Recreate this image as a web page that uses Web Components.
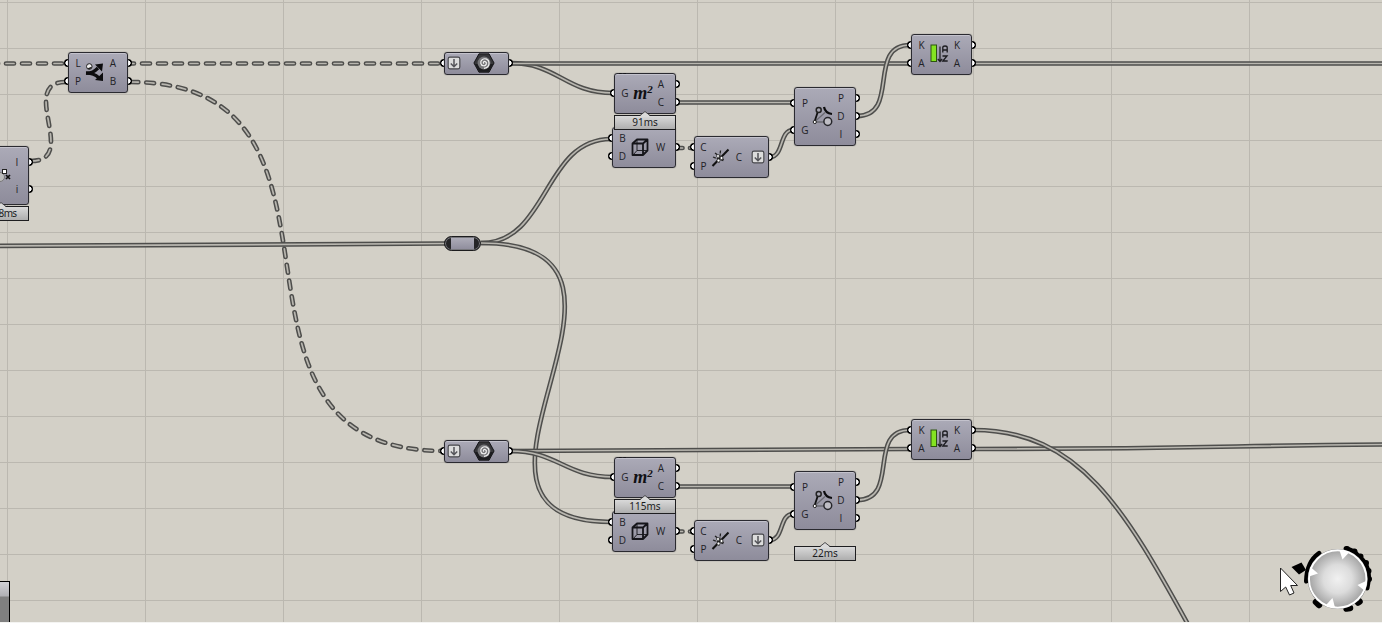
<!DOCTYPE html>
<html lang="en">
<head>
<meta charset="utf-8">
<title>Definition canvas</title>
<style>
    html, body {
        margin: 0;
        width: 100%;
        height: 100%;
        overflow: hidden;
        background: #d3d0c7;
    }
</style>
</head>
<body>
<gh-canvas>
    <gh-wires slot="wires"></gh-wires>

    <gh-component style="left:68px; top:52px; --w:60px; --in:18px" inputs="L,P" outputs="A,B" icon="dispatch"></gh-component>
    <gh-component style="left:-28px; top:146px; --w:57px; --h:59px; --out:22px" inputs="" outputs="I,i" icon="points"></gh-component>
    <gh-timer style="left:-28px; top:206px; --w:57px; --shift:14px; letter-spacing:-.7px">8ms</gh-timer>

    <gh-param style="left:444px; top:52px" ></gh-param>
    <gh-relay style="left:444px; top:236px"></gh-relay>
    <gh-param style="left:444px; top:440px"></gh-param>

    <gh-component style="left:612px; top:127px; --w:64px; --in:19px; --out:29px" inputs="B,D" outputs="W" icon="box"></gh-component>
    <gh-component style="left:614px; top:73px; --w:62px; --in:20px" inputs="G" outputs="A,C" icon="area"></gh-component>
    <gh-timer style="left:614px; top:115px; --w:62px">91ms</gh-timer>
    <gh-component style="left:694px; top:136px; --w:75px; --in:17px; --out:18px; --h:42px" inputs="C,P" outputs="C" icon="curve" graft></gh-component>
    <gh-component style="left:794px; top:87px; --w:62px; --h:59px; --in:20px" inputs="P,G" outputs="P,D,I" icon="pull"></gh-component>
    <gh-component style="left:911px; top:34px; --w:61px" inputs="K,A" outputs="K,A" icon="sort"></gh-component>

    <gh-component style="left:612px; top:511px; --w:64px; --in:19px; --out:29px" inputs="B,D" outputs="W" icon="box"></gh-component>
    <gh-component style="left:614px; top:457px; --w:62px; --in:20px" inputs="G" outputs="A,C" icon="area"></gh-component>
    <gh-timer style="left:614px; top:499px; --w:62px">115ms</gh-timer>
    <gh-component style="left:694px; top:520px; --w:75px; --in:17px; --out:18px" inputs="C,P" outputs="C" icon="curve" graft></gh-component>
    <gh-component style="left:794px; top:471px; --w:62px; --h:59px; --in:20px" inputs="P,G" outputs="P,D,I" icon="pull"></gh-component>
    <gh-timer style="left:794px; top:546px; --w:62px">22ms</gh-timer>
    <gh-component style="left:911px; top:419px; --w:61px" inputs="K,A" outputs="K,A" icon="sort"></gh-component>

    <gh-compass slot="overlay"></gh-compass>
</gh-canvas>

<script>
const svg = (body, size = 24) =>
    `<svg width="${size}" height="${size}" viewBox="0 0 24 24" fill="none">${body}</svg>`;

const icons = {
    dispatch: svg(`
        <g stroke="#0c0c0e" stroke-width="3.200">
            <path d="M3 13.200C9 13 11 12 15 8"/>
            <path d="M3 13.200C9 13.500 12 14 16 18"/>
        </g>
        <path d="M12 4.500L20 3.500L19 11.500ZM20 12.500L20 21L12 20Z" fill="#0c0c0e"/>
        <circle cx="6.300" cy="6.500" r="2.800" fill="#f0f0f0" stroke="#222"/>
        <path d="M4.200 8.500A3 3 0 0 0 9 6.500Z" fill="#222"/>`),
    points: svg(`
        <circle cx="12" cy="14" r="4.500" fill="#bcbcbc" stroke="#777"/>
        <rect x="14.500" y="6.500" width="4" height="4" fill="#fff" stroke="#222"/>
        <path d="M18 12L22 16M22 12L18 16" stroke="#111" stroke-width="1.700"/>`),
    area: `<b>m<sup>2</sup></b>`,
    box: svg(`
        <g stroke="#15151a" stroke-width="1.800" stroke-linejoin="round">
            <path d="M4.500 8.500H15V20H4.500ZM4.500 8.500L9 4.500H19.500L15 8.500M19.500 4.500V15.500L15 20"/>
            <path d="M9 5V15.500H19.500M9 15.500L5 20" stroke-width=".9"/>
        </g>`),
    curve: svg(`
        <path d="M4.500 21L20.500 4.500" stroke="#111" stroke-width="2"/>
        <path d="M5 12L16 16M12.500 5.500L11 18M7 8L16 15" stroke="#222" stroke-width="1.300" stroke-dasharray="3 1"/>
        <g fill="#fff" stroke="#222" stroke-width=".7">
            <circle cx="10" cy="11" r="1.500"/><circle cx="13.500" cy="13" r="1.500"/><circle cx="10.500" cy="15.500" r="1.500"/>
        </g>`),
    pull: svg(`
        <path d="M3.500 18L14 8.500M3.500 18H16" stroke="#6a6a72" stroke-width="1.300"/>
        <path d="M3.500 18L7 7" stroke="#111" stroke-width="1.800"/>
        <circle cx="7.700" cy="6" r="2.500" fill="#a5a4b0" stroke="#222" stroke-width="1.500"/>
        <path d="M13 3C14 8 16.500 9.500 21 10" stroke="#0c0c0e" stroke-width="2.200"/>
        <circle cx="16.800" cy="17.500" r="3.900" fill="#bebdc4" stroke="#26262b" stroke-width="1.500"/>
        <circle cx="3.800" cy="18" r="1.600" fill="#fff" stroke="#222"/>`),
    sort: svg(`
        <rect x="4" y="3" width="5.500" height="16.500" fill="#84e321" stroke="#2c5410"/>
        <path d="M13 4.500V19M10.800 17L13 19.500L15.200 17" stroke="#1b1b1f" stroke-width="1.200"/>
        <path d="M15.800 10.500V5.500Q15.800 4 18 4T20.200 5.500V10.500M15.800 8H20.200M15.500 14H20L15.800 19H20.700" stroke="#1b1b1f" stroke-width="1.300"/>`)
};

const graftBadge = svg(`
    <rect x="2" y="2" width="20" height="20" rx="3" fill="#dcdcdc" stroke="#48484c" stroke-width="2"/>
    <path d="M12 5V18.500M6.500 13L12 18.500L17.500 13" stroke="#55555a" stroke-width="2.600"/>`, 14);

// Shared look of every capsule: body gradient plus the grips sticking out behind it
const capsuleCss = `
    :host {
        position: absolute;
        display: block;
        isolation: isolate;
        width: var(--w, 60px);
        height: var(--h, 41px);
        font: 10px/14px "Open Sans", "Noto Sans", sans-serif;
        color: #222226;
    }
    svg { display: block; flex: none; }
    .body {
        display: flex;
        align-items: stretch;
        box-sizing: border-box;
        width: 100%;
        height: 100%;
        padding: 1px 0 2px;
        border: 1px solid #2a2a30;
        border-radius: 3px;
        background: linear-gradient(#abaab7, #8e8c9b);
        box-shadow: inset 0 1px #c3c2cc, 0 0 1px #55555a;
    }
    .grips {
        position: absolute;
        z-index: -1;
        top: 2px;
        bottom: 3px;
        display: flex;
        flex-direction: column;
    }
    .grips.left { left: -4px; }
    .grips.right { right: -4px; }
    .grips span { flex: 1; display: flex; align-items: center; }
    .grips span::before {
        content: "";
        width: 8px;
        height: 8px;
        border-radius: 50%;
        background: radial-gradient(circle, #fff 2.300px, #000 2.900px);
    }
`;

function grips(side, count) {
    return `<div class="grips ${side}">${'<span></span>'.repeat(count)}</div>`;
}

class GhComponent extends HTMLElement {
    constructor() {
        super();
        this.attachShadow({ mode: 'open' });
    }

    connectedCallback() {
        const names = attr => (this.getAttribute(attr) || '').split(',').filter(Boolean);
        const inputs = names('inputs');
        const outputs = names('outputs');
        const labels = list => list.map(n => `<span>${n}</span>`).join('');
        const icon = this.getAttribute('icon');

        this.shadowRoot.innerHTML = `
            <style>
                ${capsuleCss}
                .labels { display: flex; flex-direction: column; flex: none; }
                .labels span { flex: 1; display: flex; align-items: center; justify-content: center; }
                .in { width: var(--in, 19px); }
                .out { width: var(--out, 28px); margin-left: auto; }
                .icon {
                    flex: none;
                    width: 18px;
                    margin-right: -12px;
                    margin-left: -1px;
                    display: flex;
                    align-items: center;
                    justify-content: center;
                }
                .badge { width: 20px; display: flex; align-items: center; justify-content: center; }
                b { font: italic bold 18px/20px "Liberation Serif", serif; color: #101014; white-space: nowrap; }
                sup { font-size: 11px; line-height: 0; vertical-align: 6px; }
                .dots { position: absolute; left: 5px; top: 0; width: 7px; border-top: 1px dashed #17171a; }
            </style>
            ${grips('left', inputs.length)}
            ${grips('right', outputs.length)}
            <div class="body">
                <div class="labels in">${labels(inputs)}</div>
                <div class="icon">${icons[icon]}</div>
                <div class="labels out">${labels(outputs)}</div>
                ${this.hasAttribute('graft') ? `<div class="badge">${graftBadge}</div>` : ''}
            </div>
            ${icon === 'area' ? '<i class="dots"></i>' : ''}
        `;
    }
}

class GhParam extends HTMLElement {
    constructor() {
        super();
        this.attachShadow({ mode: 'open' });
        this.shadowRoot.innerHTML = `
            <style>
                ${capsuleCss}
                :host { --w: 65px; --h: 23px; }
                .body { align-items: center; padding: 0 13px 1px 2px; justify-content: space-between; }
            </style>
            ${grips('left', 1)}
            ${grips('right', 1)}
            <div class="body">
                ${graftBadge}
                ${svg(`
                    <path d="M6.500 2H17.500L23 12L17.500 22H6.500L1 12Z" fill="#37373a" stroke="#0e0e10"/>
                    <path d="M2 13L7 21.500H17L22 13Z" fill="#1c1c1f"/>
                    <circle cx="12" cy="12" r="7" fill="#77777a"/>
                    <path d="M12 12.500C10.500 11.500 12 9.500 13.500 10.500C16 12 14 15.500 11.500 15C8 14.500 7.500 10.500 10 8.500C13 6 17.500 8 17.500 12C17.500 15.500 15 17.500 12 17.800" stroke="#f0f0f0" stroke-width="1.300"/>`, 22)}
            </div>
        `;
    }
}

class GhRelay extends HTMLElement {
    constructor() {
        super();
        this.attachShadow({ mode: 'open' });
        this.shadowRoot.innerHTML = `
            <style>
                :host {
                    position: absolute;
                    box-sizing: border-box;
                    display: flex;
                    width: 37px;
                    height: 15px;
                    padding: 1px 6px;
                    border: 1px solid #1c1c1e;
                    border-radius: 8px;
                    background: #252527;
                    box-shadow: inset 0 0 0 1px #77777c;
                }
                div { flex: 1; background: linear-gradient(#adacb8, #908e9d); }
            </style>
            <div></div>
        `;
    }
}

class GhTimer extends HTMLElement {
    constructor() {
        super();
        this.attachShadow({ mode: 'open' });
        this.shadowRoot.innerHTML = `
            <style>
                :host {
                    position: absolute;
                    box-sizing: border-box;
                    display: flex;
                    justify-content: center;
                    width: var(--w);
                    height: 15px;
                    border: 1px solid #1e1e20;
                    background: linear-gradient(#d9d9d9, #aeaeae);
                    font: 10px/13px "Noto Sans", "Open Sans", sans-serif;
                    color: #1c1c1e;
                }
                svg { position: absolute; left: calc(50% - 5px); top: -5px; }
                span { padding-left: var(--shift, 0px); }
            </style>
            <svg width="10" height="6" viewBox="0 0 10 6"><path d="M0 5L5 .5L10 5V6H0Z" fill="#dadada"/><path d="M0 4.500L5 .5L10 4.500" fill="none" stroke="#3c3c40" stroke-width=".9"/></svg>
            <span><slot></slot></span>
        `;
    }
}

class GhWires extends HTMLElement {
    constructor() {
        super();
        this.attachShadow({ mode: 'open' });

        // Horizontal tangents at both ends, d and e are the tangent lengths
        const link = (x1, y1, x2, y2, d, e = d) =>
            `M${x1} ${y1}C${x1 + d} ${y1} ${x2 - e} ${y2} ${x2} ${y2}`;

        const trees = [
            'M-26 63.500H66',
            'M126 63.500H444',
            link(31, 161, 66, 82, 49),
            link(130, 82, 444, 451, 258)
        ];
        const lists = [
            'M-10 246C150 245.500 300 243.500 446 243.500',
            link(510, 63, 613, 93, 48),
            'M510 63.500H910',
            'M973 63.500H1390',
            link(481, 243, 611, 139, 68),
            link(481, 243, 611, 522, 212, 200),
            'M677 102.500H793',
            link(770, 157, 793, 130, 14),
            link(857, 116, 910, 45, 44),
            link(510, 451, 910, 449, 200),
            link(510, 451, 613, 477, 48),
            'M677 486.500H793',
            link(770, 540, 793, 514, 14),
            link(857, 500, 910, 430, 44),
            link(973, 449, 1500, 444, 260),
            'M973 430C1080 430 1125 510 1190 628'
        ];
        const stubs = ['M677 148H682.500M690 148H693', 'M677 531.500H682.500M690 531.500H693'];

        const draw = (paths, cls) => paths.map(d =>
            `<path class="edge ${cls}" d="${d}"/><path class="core ${cls}" d="${d}"/>`).join('');

        this.shadowRoot.innerHTML = `
            <style>
                :host { display: block; width: 100%; height: 100%; }
                svg { display: block; }
                path { fill: none; }
                .edge { stroke: #4e4e4c; stroke-width: 4.700; }
                .core { stroke: #b9b7b0; stroke-width: 1.700; }
                .tree { stroke-linecap: round; stroke-dasharray: 8 8; }
                .stub { stroke-linecap: round; }
            </style>
            <svg width="1382" height="623">
                ${draw(trees, 'tree')}
                ${draw(lists, '')}
                ${draw(stubs, 'stub')}
            </svg>
        `;
    }
}

class GhCompass extends HTMLElement {
    constructor() {
        super();
        this.attachShadow({ mode: 'open' });
        this.shadowRoot.innerHTML = `
            <style>
                :host { position: absolute; left: 1272px; top: 540px; }
                svg { display: block; }
            </style>
            <svg width="110" height="80" viewBox="1272 540 110 80">
                <defs>
                    <radialGradient id="dial">
                        <stop offset="0" stop-color="#f1f1f1"/>
                        <stop offset=".5" stop-color="#dcdcdc"/>
                        <stop offset="1" stop-color="#a3a3a3"/>
                    </radialGradient>
                </defs>
                <g fill="none" stroke="#000" stroke-width="5" stroke-linecap="round">
                    <path d="M1319 553.500Q1307 562 1306.500 581"/>
                    <path d="M1346.500 549Q1354 551 1358 556Q1369 564 1368.500 579L1367 588"/>
                    <path d="M1346.500 549H1347M1354 551.500H1354.500M1360 556.500H1360.500M1365.500 563H1366M1368 571H1368.500M1368.500 579H1369" stroke-width="6"/>
                    <path d="M1316 602L1319 605M1346.500 608.500L1350 608M1358 602.500L1359.500 601.500" stroke-width="6.500"/>
                </g>
                <path d="M1291.500 567L1301.500 562.500L1306 570L1299 574.500Z"/>
                <circle cx="1337.700" cy="579" r="30" fill="#777"/>
                <circle cx="1337.700" cy="579" r="28.700" fill="url(#dial)" stroke="#fff" stroke-width="1.900"/>
                <g fill="#fff">
                    <path d="M1339.500 550.500L1349 552.500L1342.500 559.500Z"/>
                    <path d="M1310.500 567L1318 573.500L1309 576.500Z"/>
                    <path d="M1366 581L1357.500 585L1365 591Z"/>
                    <path d="M1332.500 598L1335 607.500L1326 605Z"/>
                </g>
                <path d="M1280.500 568V591.500L1285.700 587L1289.500 595L1294 593L1290.700 585.500H1297.500Z" fill="#fff" stroke="#222" stroke-width="1"/>
            </svg>
        `;
    }
}

class GhCanvas extends HTMLElement {
    constructor() {
        super();
        this.attachShadow({ mode: 'open' });
        this.shadowRoot.innerHTML = `
            <style>
                :host {
                    position: relative;
                    display: block;
                    width: 1382px;
                    height: 623px;
                    overflow: hidden;
                    background:
                        linear-gradient(90deg, #bbb8b0 1px, transparent 1px) 7px 0 / 138px 100%,
                        linear-gradient(#bbb8b0 1px, transparent 1px) 0 2px / 100% 46px,
                        #d3d0c7;
                }
                .panel {
                    position: absolute;
                    left: -1px;
                    bottom: 1px;
                    box-sizing: border-box;
                    width: 11px;
                    height: 41px;
                    border: solid #000;
                    border-width: 1px 1px 0 0;
                    background: linear-gradient(#d2d2d6, #b0b0b4 14px, #808080 15px);
                }
                .edge { position: absolute; left: 0; right: 0; bottom: 0; height: 1px; background: #f4f4f2; }
            </style>
            <slot name="wires"></slot>
            <slot></slot>
            <div class="panel"></div>
            <slot name="overlay"></slot>
            <div class="edge"></div>
        `;
    }
}

customElements.define('gh-canvas', GhCanvas);
customElements.define('gh-wires', GhWires);
customElements.define('gh-component', GhComponent);
customElements.define('gh-param', GhParam);
customElements.define('gh-relay', GhRelay);
customElements.define('gh-timer', GhTimer);
customElements.define('gh-compass', GhCompass);
</script>
</body>
</html>
